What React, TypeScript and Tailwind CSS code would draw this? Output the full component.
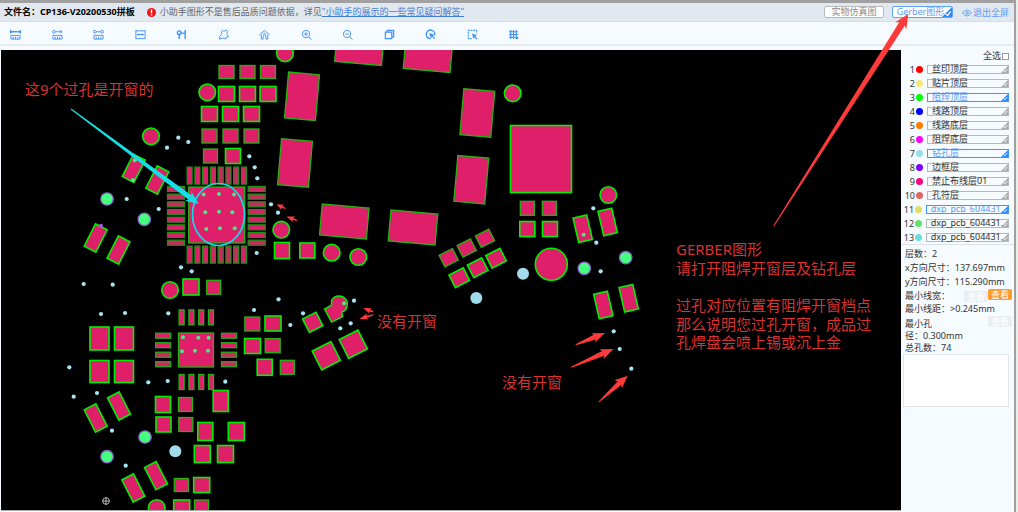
import type { ReactNode } from "react";
import { Eye } from "lucide-react";
import clsx from "clsx";

type Pad = [x: number, y: number, w: number, h: number, rotate?: number];
type Point = [x: number, y: number];

const layers = [
  { name: "丝印顶层", color: "#ff0000", active: false },
  { name: "贴片顶层", color: "#f7e77b", active: false },
  { name: "阻焊顶层", color: "#00ff00", active: true },
  { name: "线路顶层", color: "#0000ff", active: false },
  { name: "线路底层", color: "#ff7f00", active: false },
  { name: "阻焊底层", color: "#ff00ff", active: false },
  { name: "钻孔层", color: "#9adcea", active: true },
  { name: "边框层", color: "#7f00ff", active: false },
  { name: "禁止布线层01", color: "#ff007f", active: false },
  { name: "孔符层", color: "#e06666", active: false },
  { name: "dxp_pcb_604431...", color: "#e0de66", active: true },
  { name: "dxp_pcb_604431...", color: "#66e066", active: false },
  { name: "dxp_pcb_604431...", color: "#66e0de", active: false },
];

// pads with a full solder mask outline
const pads: Pad[] = [
  [226.5, 94, 16, 15], [247.5, 94, 16, 15], [268, 94, 16, 15],
  [209.5, 114, 16, 15], [230.5, 114, 16, 15], [251.5, 114, 16, 15],
  [233, 156, 15, 15], [191, 287, 16, 16],
  [133.7, 168.3, 13, 25, 27], [157.3, 180, 13, 25, 27], [95.7, 238, 13, 25, 27], [118.5, 250, 13, 25, 27],
  [99.5, 338.5, 19, 23], [124, 338.5, 19, 23], [99.5, 371.5, 19, 22], [124, 371.5, 19, 22],
  [273, 323.5, 16, 15], [252.5, 346, 16, 15], [264.7, 367.3, 15, 16],
  [95.7, 418, 13, 25, -27], [119, 406, 13, 25, -27], [156, 475.7, 13, 25, -27], [133.3, 488, 13, 25, -27],
  [163, 404.5, 15, 16], [163.5, 424.5, 15, 15], [220.7, 401, 15, 21], [205.3, 431.5, 15, 18], [236.3, 431.5, 16, 18],
  [202.3, 454, 16, 17], [225.5, 454, 16, 17], [201.7, 485, 16, 15], [181.7, 508, 16, 16],
  [282, 250.5, 15, 16], [307.3, 250.5, 15, 15],
  [459.3, 277.7, 16, 14, -27], [477.7, 267.7, 16, 14, -27], [496, 258.3, 16, 14, -27],
  [312.7, 322.3, 15, 15, -27],
  [326.3, 355.7, 21, 21, -27], [353.3, 344.3, 21, 21, -27],
  [541, 159, 61, 67], [527.3, 229, 15, 15], [550, 229, 15, 15],
  [582.7, 228.7, 14, 25, -13], [607.7, 222, 14, 25, -13], [603.3, 305, 14, 25, -13], [628.7, 298.3, 14, 25, -13],
];

const thinPads: Pad[] = [
  [226.5, 72, 15, 13], [247.5, 72, 15, 13], [268, 72, 15, 13],
  [209.5, 136, 15, 14], [230.5, 136, 15, 14], [251.5, 136, 15, 14], [210.5, 156, 14, 14],
  [213.7, 287.3, 14, 14], [216.7, 215, 56, 56], [196, 350, 35, 34],
  [252.3, 324, 15, 14], [272.7, 345.7, 15, 14], [287.3, 367.3, 14, 14],
  [185.5, 404.5, 14, 14], [185.8, 424.5, 14, 14], [181.3, 485, 14, 13], [201.5, 508, 14, 16],
  [359.4, 48, 47, 31, 5], [428, 55, 47, 31, 5], [302, 96.3, 31, 46, 5], [295, 163, 31, 46, 5],
  [477.3, 113, 31, 46, 5], [471.3, 179.7, 31, 46, 5], [344.3, 221.5, 47, 31, 5], [413, 227.5, 47, 31, 5],
  [448.7, 257.7, 15, 13, -27], [466.7, 248, 15, 13, -27], [485, 238.3, 15, 13, -27],
  [527.3, 208.3, 14, 14], [549.3, 208.3, 14, 14],
];

const qfpPins: Pad[] = Array.from({ length: 8 }, (_, i): Pad[] => [
  [189.6 + i * 7.77, 175.6, 5, 17],
  [189.6 + i * 7.77, 254.6, 5, 17],
  [176, 189 + i * 7.67, 17, 5],
  [256.7, 189 + i * 7.67, 17, 5],
]).flat();

const qfnPins: Pad[] = Array.from({ length: 4 }, (_, i): Pad[] => [
  [181.6 + i * 9.8, 317.4, 5, 15],
  [181.6 + i * 9.8, 382, 5, 15],
  [163.2, 335.7 + i * 9.5, 15, 5],
  [229, 335.7 + i * 9.5, 15, 5],
]).flat();

const roundPads: Point[] = [
  [207.3, 92.3], [151, 136.3], [170, 290], [156.7, 508], [285, 53.3], [512.7, 93.3],
  [281.3, 229.7], [331.7, 252.7], [358.3, 257], [608.3, 195],
];

const drills: Point[] = [
  [167, 147.7], [178.3, 137.7], [188.3, 142], [249.3, 156.3], [254.7, 167.3], [257.3, 178.3], [126.7, 199],
  [158.7, 209], [83.7, 284], [112.7, 284.7], [181, 267.3], [191.7, 271.3], [256.7, 253], [101, 314], [125, 313],
  [168.3, 313.3], [254, 310], [271, 204.3], [278, 212.7], [278.5, 299.3], [69.3, 367.3], [73.7, 396.7], [97, 393],
  [148.3, 382.3], [167.7, 381], [225.3, 381.7], [112, 430.7], [125.7, 465.7], [290.3, 325], [303, 313.3],
  [354, 300.7], [340.3, 328.3], [350.7, 323.3], [593.3, 208.3], [596.3, 242.7], [600.7, 271.3],
  [613.7, 331.3], [619.7, 349], [631.3, 368.7],
];

const vias: Point[] = [
  [203.7, 194.6], [219, 194], [234, 194.6], [205.3, 212.3], [219, 211.7], [232.3, 212.3], [206.3, 229], [220, 228.3], [234.7, 228.3],
  [183, 337.3], [198.3, 337.7], [208.7, 337.7], [182, 351.3], [195, 350.7], [208, 350.7],
  [134.7, 160.3], [133, 180], [344, 303.3], [583.7, 234.7],
];

const mountHoles: Point[] = [[107, 199], [144.3, 219.3], [145, 437], [107, 456.7], [584.3, 268.3], [625.7, 257.7]];
const plainHoles: Point[] = [[175.3, 451.3], [476.3, 298], [523, 273.7]];

const notes = [
  { x: 25, y: 95, text: "这9个过孔是开窗的" },
  { x: 377, y: 327, text: "没有开窗" },
  { x: 502, y: 388, text: "没有开窗" },
  { x: 676, y: 255, text: "GERBER图形" },
  { x: 676, y: 274, text: "请打开阻焊开窗层及钻孔层" },
  { x: 676, y: 311, text: "过孔对应位置有阻焊开窗档点" },
  { x: 676, y: 330, text: "那么说明您过孔开窗，成品过" },
  { x: 676, y: 348, text: "孔焊盘会喷上锡或沉上金" },
];

function Rects({ items, stroke, width }: { items: Pad[]; stroke: string; width: number }) {
  return (
    <g fill="#df1f6a" stroke={stroke} strokeWidth={width}>
      {items.map(([x, y, w, h, r = 0], i) => (
        <rect key={i} x={x - w / 2} y={y - h / 2} width={w} height={h} transform={r ? `rotate(${r} ${x} ${y})` : undefined} />
      ))}
    </g>
  );
}

function Dots({ items, r, ...rest }: { items: Point[]; r: number; fill: string; stroke?: string; strokeWidth?: number }) {
  return <g {...rest}>{items.map(([x, y], i) => <circle key={i} cx={x} cy={y} r={r} />)}</g>;
}

// arrow that widens from the tail up to its head
function Arrow({ from, to, head, neck, wing, color = "#ff3a3a" }: { from: Point; to: Point; head: number; neck: number; wing: number; color?: string }) {
  const len = Math.hypot(to[0] - from[0], to[1] - from[1]);
  const ux = (to[0] - from[0]) / len;
  const uy = (to[1] - from[1]) / len;
  const at = (along: number, side: number) => `${from[0] + ux * along - uy * side},${from[1] + uy * along + ux * side}`;
  const points = [at(0, -0.5), at(len - head * 0.85, -neck), at(len - head, -wing), at(len, 0), at(len - head, wing), at(len - head * 0.85, neck), at(0, 0.5)];
  return <polygon points={points.join(" ")} fill={color} />;
}

function Board() {
  return (
    <svg viewBox="1 50 900 460" className="pointer-events-none relative z-10 block h-auto w-full overflow-visible">
      <clipPath id="board"><rect x="1" y="50" width="900" height="460" /></clipPath>
      <rect x="1" y="50" width="900" height="460" fill="#000" />
      <g clipPath="url(#board)">
        <Dots items={roundPads} r={8.3} fill="#df1f6a" stroke="#00f000" strokeWidth={1.6} />
        <circle cx="551.3" cy="264.3" r="16" fill="#df1f6a" stroke="#00f000" strokeWidth="1.6" />
        <Rects items={pads} stroke="#00f000" width={1.6} />
        <Rects items={thinPads} stroke="#23b40f" width={1.3} />
        <Rects items={qfpPins} stroke="#1f8f14" width={1.3} />
        <Rects items={qfnPins} stroke="#1fb014" width={1.3} />
        <path d="M331.600 300.500a8.300 8.300 0 1 1 10 11.600l1 4.500-11 5.500-7-13 7-4z" fill="#df1f6a" stroke="#00f000" strokeWidth="1.5" />
        <Dots items={drills} r={2.100} fill="#a5e6f5" />
        <Dots items={vias} r={2} fill="#48e884" />
        <Dots items={mountHoles} r={6.200} fill="#45ff7f" stroke="#8a68c8" strokeWidth={1.300} />
        <Dots items={plainHoles} r={6} fill="#a0dcec" />
        <circle cx="101" cy="225.7" r="2" fill="#a25be0" />
        <g fill="none" stroke="#d8d8d8" strokeWidth="0.8">
          <circle cx="106" cy="501" r="3.3" />
          <path d="M102 501h8M106 497v8" />
        </g>
      </g>
      <ellipse cx="218.5" cy="214.5" rx="26" ry="31" fill="none" stroke="#14d8e4" strokeWidth="1.7" />
      <Arrow from={[71, 109]} to={[198.7, 204]} head={13} neck={2.6} wing={5.5} color="#14dfe6" />
      <Arrow from={[285.5, 208.5]} to={[276.5, 204.5]} head={7} neck={1} wing={3} />
      <Arrow from={[297, 220.5]} to={[286.5, 216.5]} head={8} neck={1} wing={3} />
      <Arrow from={[373.5, 312]} to={[363.3, 308]} head={8} neck={1} wing={3} />
      <Arrow from={[373.5, 314.7]} to={[359.3, 319]} head={9} neck={1} wing={3} />
      <Arrow from={[575.7, 344.7]} to={[605, 333]} head={13} neck={2.6} wing={5} />
      <Arrow from={[571.3, 367.3]} to={[613.3, 349]} head={13} neck={2.6} wing={5.5} />
      <Arrow from={[598.7, 402]} to={[627.7, 375.7]} head={13} neck={2.6} wing={5.5} />
      <Arrow from={[773.7, 226]} to={[908.3, 14]} head={14} neck={3.2} wing={6.5} />
      <g fill="#d83232" fontSize="15">
        {notes.map((n, i) => <text key={i} x={n.x} y={n.y}>{n.text}</text>)}
      </g>
    </svg>
  );
}

const ruler = <path d="M1 7v4h10V7zM3.500 8.500V11M6 8.500V11M8.500 8.500V11" />;

const tools: { label: string; icon: ReactNode }[] = [
  { label: "测量边到边", icon: <><path d="M1 3h10" strokeWidth="1.500" /><path d="M0 .5v5L3 3zM12 .5v5L9 3z" fill="currentColor" stroke="none" />{ruler}</> },
  { label: "测量圆心", icon: <><path d="M3.500 3H11M9 1.500L11 3 9 4.500" /><circle cx="2" cy="3" r="1.500" />{ruler}</> },
  { label: "测量间距", icon: <><circle cx="2" cy="3" r="1.500" /><circle cx="10" cy="3" r="1.500" /><path d="M3.500 3h5" />{ruler}</> },
  { label: "线宽", icon: <><path d="M1 1v10M11 1v10M1 2h10M1 10.500h10M3 6h6" /><path d="M2 6l2.500-1.500v3zM10 6L7.500 4.500v3z" fill="currentColor" stroke="none" /></> },
  { label: "孔径", icon: <><circle cx="3.500" cy="4" r="2" strokeWidth="1.500" /><path d="M3.500 6v5M5.500 4.500h4.500M10 1v10" strokeWidth="1.500" /></> },
  { label: "面积", icon: <path d="M5 1.500l1.500 1L9 1l1.500 2L9.500 5l2 3.500-2.500.5-.5 2-3-1-4 1 .5-3L4.500 5 3.500 3z" /> },
  { label: "复位", icon: <path d="M.5 6.500L6 1.500l5.500 5M2.500 6v5h2V8a1.500 1.500 0 0 1 3 0v3h2V6M4.500 5.500a2 2 0 0 1 3 0" /> },
  { label: "放大", icon: <><circle cx="5.500" cy="5.500" r="4" /><path d="M8.500 8.500l3 3M3.500 5.500h4M5.500 3.500v4" /></> },
  { label: "缩小", icon: <><circle cx="5.500" cy="5.500" r="4" /><path d="M8.500 8.500l3 3M3.500 5.500h4" /></> },
  { label: "翻转", icon: <path d="M1.500 3.500h7v7h-7zM3.500 3V1.500h7v7H9" strokeWidth="1.300" /> },
  { label: "高亮", icon: <><path d="M6 10.500A4.700 4.700 0 1 1 10.600 7" strokeWidth="1.400" /><path d="M4.500 4l6 2.500-2 1 2.500 2.500-1 1-2.500-2.500-1 2z" fill="currentColor" stroke="none" /></> },
  { label: "框选", icon: <><path d="M5 10.500H1.500v-9h9V5" strokeDasharray="2 1" strokeWidth="1.300" /><path d="M5.500 5l5.500 2-2 1 2.500 2.500-1 1L8 9l-1 2z" fill="currentColor" stroke="none" /></> },
  { label: "网格", icon: <><path d="M3 1v10M6 1v10M9 1v10M1 3h10M1 6h10M1 9h7" strokeWidth="1.200" /><path d="M8.500 8.500H11V11H8.500z" fill="currentColor" stroke="none" /></> },
];

function Corner({ className }: { className: string }) {
  return (
    <svg viewBox="0 0 8 8" className={clsx("absolute right-0 bottom-0", className)}>
      <path d="M8 0v8H0z" fill="currentColor" />
      <path d="M3 5.500l1.500 1.300L7 3.500" fill="none" stroke="#fff" />
    </svg>
  );
}

function CheckButton({ ghost = false, className }: { ghost?: boolean; className?: string }) {
  return (
    <button className={clsx("h-[11px] w-6 rounded-[2px] text-[9px] leading-[11px] text-white", ghost ? "bg-[#ebeef1]" : "bg-[#ff9a2a]", className)}>查看</button>
  );
}

function Sidebar() {
  return (
    <aside className="w-[113px] shrink-0 text-[9px] leading-[14px] text-[#333]">
      <label className="flex h-3 items-center justify-end gap-px pr-[5px] leading-3">
        全选
        <input type="checkbox" className="size-[7px] appearance-none border border-[#999] bg-white" />
      </label>
      <ol className="border-b border-[#dde3e8]">
        {layers.map((layer, i) => (
          <li key={i} className="flex h-[14px] items-center pr-[5px]">
            <span className="w-[14px] pt-[2px] text-right leading-3">{i + 1}</span>
            <span className="mr-1 ml-px size-[7px] rounded-full" style={{ backgroundColor: layer.color }} />
            <button className={clsx("relative flex h-[9px] flex-1 items-center border pl-1 leading-[14px] whitespace-nowrap", layer.active ? "border-[#3d95ff] text-[#5b9cf5]" : "border-[#b5b8ba]")}>
              <Corner className={clsx("size-[7px]", layer.active ? "text-[#2a88ff]" : "text-[#aaa]")} />
              <span>{layer.name}</span>
            </button>
          </li>
        ))}
      </ol>
      <dl className="px-1 pt-[2px]">
        <div className="h-[14px]"><dt className="inline">层数：</dt><dd className="inline">2</dd></div>
        <div className="h-[14px] whitespace-nowrap"><dt className="inline">x方向尺寸：</dt><dd className="inline">137.697mm</dd></div>
        <div className="h-[14px] whitespace-nowrap"><dt className="inline">y方向尺寸：</dt><dd className="inline">115.290mm</dd></div>
        <div className="-mr-[2px] flex h-[13px]">
          <dt className="flex-1">最小线宽：</dt>
          <dd className="flex items-start"><CheckButton ghost className="mt-[2px]" /><CheckButton /></dd>
        </div>
        <div className="h-[14px] whitespace-nowrap"><dt className="inline">最小线距：</dt><dd className="inline">&gt;0.245mm</dd></div>
        <div className="-mr-[2px] flex h-[25px] justify-between leading-3">
          <div className="w-14 pt-[2px]"><dt className="inline">最小孔<br />径：</dt><dd className="inline">0.300mm</dd></div>
          <CheckButton ghost />
        </div>
        <div className="h-[13px]"><dt className="inline">总孔数：</dt><dd className="inline">74</dd></div>
      </dl>
      <textarea aria-label="备注" className="ml-[2px] block h-[53px] w-[106px] resize-none border border-[#e3e6e8] bg-white" />
    </aside>
  );
}

export default function App() {
  return (
    <div className="min-h-screen bg-[#e9efe9] pr-[2px] font-['Noto_Sans','Noto_Sans_CJK_SC',sans-serif]">
      <div className="min-h-screen border-t-[3px] border-r-2 border-[#a0a0a0] bg-[#f6fbff]">
        <header className="flex h-[19px] items-center border-b border-[#d9dee2] bg-[#e1e8ef] pr-[5px] pl-1 text-[9px] leading-3 whitespace-nowrap">
          <h1 className="font-bold text-black">文件名：CP136-V20200530拼板</h1>
          <svg viewBox="0 0 10 10" className="mr-1 ml-3 size-[9px]">
            <circle cx="5" cy="5" r="5" fill="#f01414" />
            <path d="M5 1.800v4M5 7v1.400" stroke="#fff" strokeWidth="1.600" />
          </svg>
          <p className="text-[#666]">小助手图形不是售后品质问题依据，详见<a href="#faq" className="text-[#3f7fd6] underline">"小助手的展示的一些常见疑问解答"</a></p>
          <button className="ml-auto h-3 w-[60px] rounded-[2px] border border-[#bbb] bg-white leading-[10px] text-[#888]">实物仿真图</button>
          <button className="relative mr-[9px] ml-2 h-3 w-[61px] rounded-[2px] border border-[#5ba3ff] bg-white pr-1 leading-[10px] text-[#5b9cf5]">
            Gerber图形
            <Corner className="size-[10px] text-[#2a88ff]" />
          </button>
          <button className="flex items-center gap-px pt-px text-[#5b9cf5]"><Eye className="size-[10px]" />退出全屏</button>
        </header>
        <nav className="h-6 border-b-2 border-[#e6ebee] pt-[2px] pl-[10px]">
          <div className="flex h-full w-full max-w-[509px] items-center justify-between">
            {tools.map((tool) => (
              <button key={tool.label} aria-label={tool.label} className="text-[#3d92fa]">
                <svg viewBox="0 0 12 12" fill="none" stroke="currentColor" strokeWidth="1" className="size-[11px]">{tool.icon}</svg>
              </button>
            ))}
          </div>
        </nav>
        <main className="flex items-start pt-1 pl-px">
          <div className="min-w-0 flex-1 border-b border-[#aaa]"><Board /></div>
          <Sidebar />
        </main>
      </div>
    </div>
  );
}
